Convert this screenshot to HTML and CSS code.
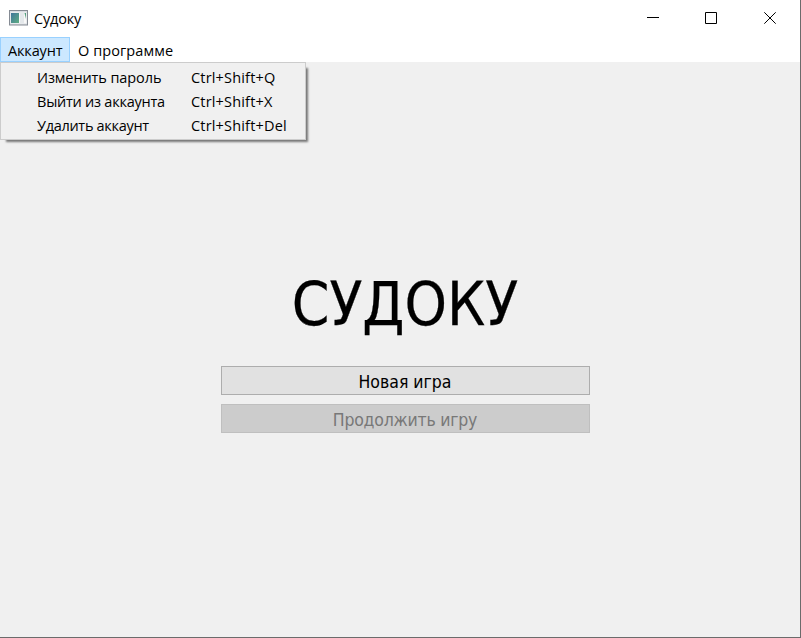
FILE: index.html
```html
<!DOCTYPE html>
<html lang="ru">
<head>
<meta charset="utf-8">
<title>Судоку</title>
<link rel="stylesheet" href="styles.css">
</head>
<body>
<div class="window">
  <header class="titlebar">
    <svg class="app-icon" width="19" height="16" viewBox="0 0 19 16">
      <defs><linearGradient id="pane" x1="0" y1="0" x2="1" y2="1"><stop offset="0" stop-color="#3f759b"/><stop offset="1" stop-color="#5fae83"/></linearGradient></defs>
      <path fill="#858b94" d="M0 0h19v15.500H0z"/>
      <path fill="#d8dce1" d="M1 1h17v13.500H1z"/>
      <path fill="#f8f8f8" d="M1.500 2.500h16v11h-16z"/>
      <path fill="url(#pane)" d="M2 3h8v10H2z"/>
      <path fill="#e4e8eb" d="M11 3h4v10h-4z"/>
      <path fill="#55a07f" d="M15.500 3h1.500v6z"/>
    </svg>
    <span class="caption">Судоку</span>
    <div class="controls">
      <svg width="12" height="12" viewBox="0 0 12 12"><path d="M0 5.500h12"/></svg>
      <svg width="12" height="12" viewBox="0 0 12 12"><path d="M.5.500h11v11H.5z"/></svg>
      <svg width="12" height="12" viewBox="0 0 12 12"><path d="M.3.300l11.400 11.400M11.700.300L.3 11.700"/></svg>
    </div>
  </header>
  <nav class="menubar">
    <div class="menu-item open"><span class="account">Аккаунт</span>
      <div class="dropdown">
        <span class="change">Изменить пароль</span><span class="key">Ctrl+Shift+Q</span>
        <span class="logout">Выйти из аккаунта</span><span class="key">Ctrl+Shift+X</span>
        <span class="delete">Удалить аккаунт</span><span class="key">Ctrl+Shift+Del</span>
      </div>
    </div>
    <div class="menu-item"><span class="about">О программе</span></div>
  </nav>
  <main class="content">
    <h1>СУДОКУ</h1>
    <button class="new-game">Новая игра</button>
    <button class="resume" disabled>Продолжить игру</button>
  </main>
</div>
</body>
</html>
```
FILE: styles.css
```css
* { box-sizing: border-box; }
body { margin: 0; font: 14.5px/24px "Open Sans", "Noto Sans", sans-serif; color: #000; }
.window { width: 801px; height: 638px; display: flex; flex-direction: column; background: #f0f0f0; border-right: 1px solid #6b6b6b; border-bottom: 1px solid #6b6b6b; white-space: nowrap; }
.titlebar { height: 37px; display: flex; align-items: center; padding: 0 24px 0 9px; background: #fff; }
.app-icon { margin-top: -1px; }
.caption { margin-left: 6px; letter-spacing: -.2px; }
.controls { margin-left: auto; display: flex; gap: 46px; margin-top: -1px; }
.controls svg { fill: none; stroke: #000; stroke-width: 1; }
.controls svg:last-child { margin-left: 1px; }
.menubar { height: 25px; display: flex; background: #fff; }
.menu-item { position: relative; height: 25px; padding: 2px 8px 0; }
.open { width: 70px; padding: 1px 7px 0; border: 1px solid #99d1ff; background: #cce8ff; }
.account { letter-spacing: -.15px; }
.about { letter-spacing: .08px; }
.dropdown { position: absolute; z-index: 2; top: 24px; left: -1px; width: 306px; height: 78px; padding: 3px 0 2px 36px; display: grid; grid-template-columns: 154px auto; grid-auto-rows: 24px; background: #f0f0f0; border: 1px solid #ccc; box-shadow: 4px 4px 2px -2px #777; }
.change { letter-spacing: -.1px; }
.logout { letter-spacing: -.24px; }
.delete { letter-spacing: -.3px; }
.key { letter-spacing: .18px; }
.content { flex: 1; display: flex; flex-direction: column; align-items: center; padding: 205px 0 0 10px; }
h1 { margin: 0; height: 99px; font: condensed 60px/75px "DejaVu Sans Condensed", "DejaVu Sans", sans-serif; -webkit-text-stroke: .25px #000; }
button { width: 369px; height: 29px; margin: 0 0 9px; padding: 3px 0 0; border: 1px solid #adadad; background: #e1e1e1; color: #000; font: condensed 17.5px/24px "DejaVu Sans Condensed", "DejaVu Sans", sans-serif; }
.resume { border-color: #bfbfbf; background: #ccc; color: #787878; letter-spacing: -.22px; }
```
